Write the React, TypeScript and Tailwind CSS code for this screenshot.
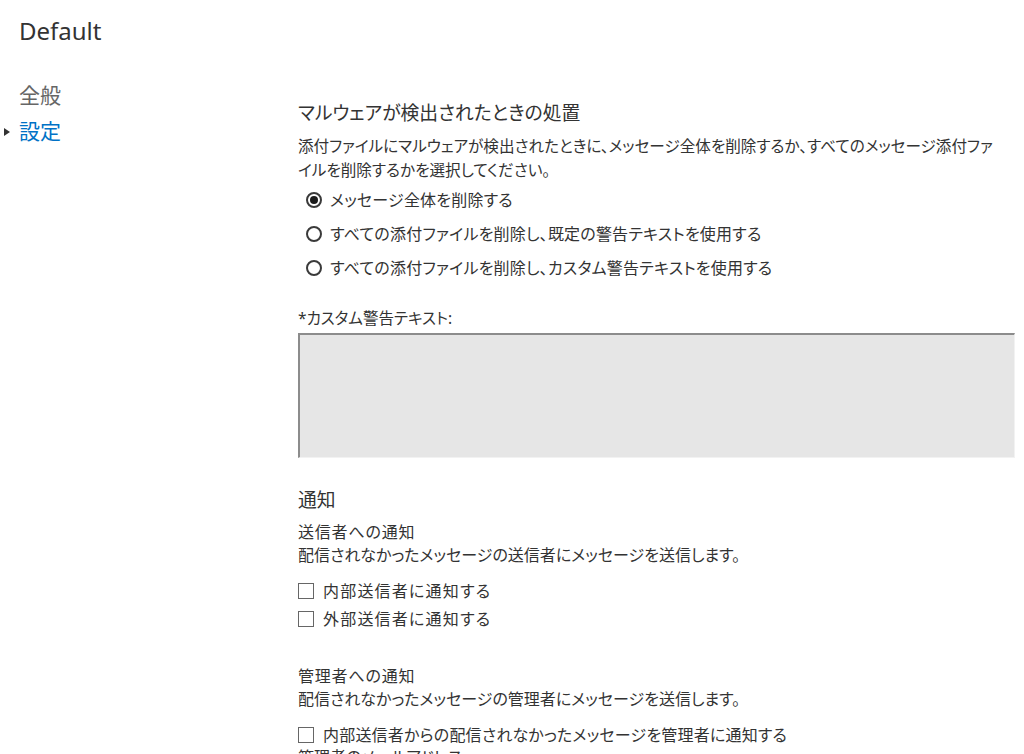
import { useState } from 'react';

const font = "font-['Noto_Sans','Noto_Sans_CJK_JP',sans-serif] [font-feature-settings:'palt']";

function Radio({ checked, label, onClick }: { checked: boolean; label: string; onClick: () => void }) {
  return (
    <div className="flex items-center h-[34px] pl-[8px] cursor-pointer" onClick={onClick}>
      <span className="w-[16px] h-[16px] rounded-full border-2 border-[#3a3a3a] flex items-center justify-center shrink-0">
        {checked && <span className="w-[8px] h-[8px] rounded-full bg-[#1a1a1a]" />}
      </span>
      <span className="ml-[8px] text-[16px] leading-[20px] tracking-[0.2px] text-[#333]">{label}</span>
    </div>
  );
}

function Check({ label, wide }: { label: string; wide?: boolean }) {
  const [on, setOn] = useState(false);
  return (
    <div className="flex items-center h-[28px] cursor-pointer" onClick={() => setOn(!on)}>
      <span className="w-[16px] h-[16px] border-[1.5px] border-[#666] flex items-center justify-center shrink-0">
        {on && (
          <svg viewBox="0 0 16 16" className="w-[12px] h-[12px]">
            <path d="M2 8l4 4 8-9" fill="none" stroke="#333" strokeWidth="2" />
          </svg>
        )}
      </span>
      <span className={`ml-[9px] text-[16px] leading-[20px] text-[#333] ${wide ? 'tracking-[1.2px]' : 'tracking-[0.2px]'}`}>{label}</span>
    </div>
  );
}

export default function App() {
  const [action, setAction] = useState(0);
  const [tab, setTab] = useState<'general' | 'settings'>('settings');

  return (
    <div className={`${font} w-[1024px] h-[754px] overflow-hidden bg-white text-[#333]`}>
      <div className="pt-[15px] pl-[19px] text-[24px] leading-[32px] text-[#333]">Default</div>

      <div className="flex">
        {/* left nav */}
        <div className="w-[298px] shrink-0 pt-[31px]">
          <div
            className={`flex items-center h-[36px] pl-[19px] text-[21px] cursor-pointer ${tab === 'general' ? 'text-[#0072c6]' : 'text-[#666]'}`}
            onClick={() => setTab('general')}
          >
            全般
          </div>
          <div
            className={`flex items-center h-[36px] pl-[4px] text-[21px] cursor-pointer ${tab === 'settings' ? 'text-[#0072c6]' : 'text-[#666]'}`}
            onClick={() => setTab('settings')}
          >
            <svg viewBox="0 0 6 8" className="w-[6px] h-[8px] mr-[9px]">
              <path d="M0 0l6 4-6 4z" fill="#333" />
            </svg>
            設定
          </div>
        </div>

        {/* content */}
        <div className="w-[726px] shrink-0 pt-[53px]">
          <h2 className="text-[18.8px] leading-[26px] text-[#333] font-normal">マルウェアが検出されたときの処置</h2>
          <p className="mt-[8px] text-[15.6px] leading-[24px] text-[#333] whitespace-nowrap">
            添付ファイルにマルウェアが検出されたときに、メッセージ全体を削除するか、すべてのメッセージ添付ファ
            <br />
            イルを削除するかを選択してください。
          </p>

          <div className="mt-[1px]">
            <Radio checked={action === 0} onClick={() => setAction(0)} label="メッセージ全体を削除する" />
            <Radio checked={action === 1} onClick={() => setAction(1)} label="すべての添付ファイルを削除し、既定の警告テキストを使用する" />
            <Radio checked={action === 2} onClick={() => setAction(2)} label="すべての添付ファイルを削除し、カスタム警告テキストを使用する" />
          </div>

          <div className="mt-[22px] text-[15.5px] leading-[22px] text-[#333]">*カスタム警告テキスト:</div>
          <textarea
            disabled={action !== 2}
            className="block mt-[4px] w-[717px] h-[125px] resize-none bg-[#e6e6e6] border-t-2 border-l-2 border-t-[#8c8c8c] border-l-[#8c8c8c] border-r border-b border-r-[#f2f2f2] border-b-[#f2f2f2] outline-none"
          />

          <h2 className="mt-[29px] text-[18.8px] leading-[26px] text-[#333] font-normal">通知</h2>
          <div className="mt-[8px] text-[16px] leading-[23px] tracking-[0.8px] text-[#333]">送信者への通知</div>
          <div className="text-[16px] leading-[23px] text-[#333]">配信されなかったメッセージの送信者にメッセージを送信します。</div>
          <div className="mt-[10px]">
            <Check wide label="内部送信者に通知する" />
            <Check wide label="外部送信者に通知する" />
          </div>

          <div className="mt-[32px] text-[16px] leading-[23px] tracking-[0.8px] text-[#333]">管理者への通知</div>
          <div className="text-[16px] leading-[23px] text-[#333]">配信されなかったメッセージの管理者にメッセージを送信します。</div>
          <div className="mt-[10px]">
            <Check label="内部送信者からの配信されなかったメッセージを管理者に通知する" />
          </div>
          <div className="text-[16px] leading-[16px] text-[#333]">管理者のメールアドレス:</div>
        </div>
      </div>
    </div>
  );
}
